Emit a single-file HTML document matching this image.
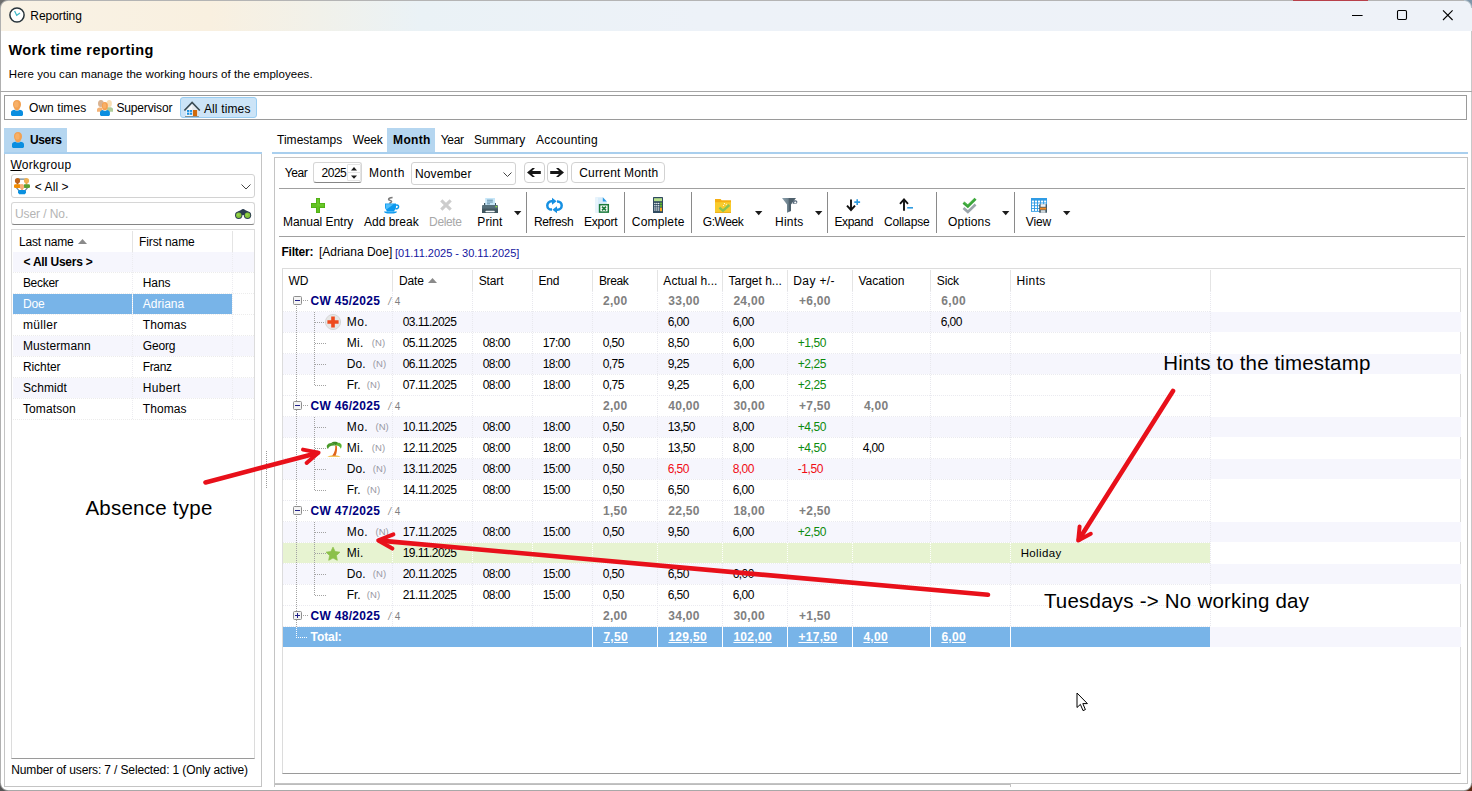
<!DOCTYPE html>
<html><head><meta charset="utf-8"><title>Reporting</title>
<style>
*{box-sizing:border-box;margin:0;padding:0}
html,body{width:1472px;height:791px;overflow:hidden;background:#fff}
body{font-family:"Liberation Sans",sans-serif;font-size:12px;color:#000;position:relative}
.a{position:absolute}
.t{position:absolute;white-space:nowrap;line-height:14px;height:14px}
.b{font-weight:bold}
.box{position:absolute;border:1px solid #a0a0a0;background:#fff}
.g{color:#808080}
.grn{color:#0c8a0c}
.red{color:#f00c14}
.navy{color:#000080}
.w{color:#fff}
svg{position:absolute;overflow:visible}
</style></head>
<body>
<div class="a" style="left:0px;top:0px;width:1472px;height:31px;background:linear-gradient(90deg,#f9f2e5 0px,#f9f0e0 210px,#f1f1ea 320px,#eaf2f6 420px,#edf2f8 700px,#eef2f8 1472px);"></div>
<div class="a" style="left:0px;top:0px;width:1472px;height:1px;background:#b4b4b4;"></div>
<div class="a" style="left:0px;top:0px;width:1px;height:791px;background:#b0b0b0;"></div>
<div class="a" style="left:0px;top:790px;width:1472px;height:1px;background:#a8a8a8;"></div>
<div class="a" style="left:1471px;top:31px;width:1px;height:760px;background:#c8c8c8;"></div>
<div class="a" style="left:0;top:0;width:8px;height:8px;background:radial-gradient(circle at 8px 8px,transparent 6.5px,#a8a8a8 7.5px,#6e6e6e 8.5px)"></div>
<div class="a" style="left:1464px;top:783px;width:8px;height:8px;background:radial-gradient(circle at 0 0,transparent 6.5px,#9a9a9a 7.5px,#5a2a14 8.5px)"></div>
<div class="a" style="left:0;top:783px;width:8px;height:8px;background:radial-gradient(circle at 8px 0,transparent 6.5px,#9a9a9a 7.5px,#555 8.5px)"></div>
<div class="a" style="left:1464px;top:0;width:8px;height:8px;background:radial-gradient(circle at 0 8px,transparent 6.5px,#b8c4cc 7.5px,#7e96aa 8.5px)"></div>
<div class="a" style="left:1293px;top:0px;width:75px;height:1px;background:#b8404a;"></div>
<div class="a" style="left:275px;top:784px;width:736px;height:1px;background:#bcbcbc;"></div>
<div class="a" style="left:274px;top:784px;width:1px;height:3px;background:#c4c4c4;"></div>
<div class="a" style="left:1010px;top:784px;width:1px;height:3px;background:#c4c4c4;"></div>
<svg style="left:9px;top:7px" width="16" height="16" viewBox="0 0 16 16"><circle cx="8" cy="8" r="7.1" fill="#fff" stroke="#27333a" stroke-width="1.5"/><path d="M5.6 3.9L7.7 8.3L11 5.9" fill="none" stroke="#3fb8c8" stroke-width="1.2"/></svg>
<div class="t " style="left:30.3px;top:9px;letter-spacing:-0.06px;">Reporting</div>
<svg style="left:1350px;top:8px" width="110" height="16" viewBox="0 0 110 16"><path d="M2 7.5h10.6" stroke="#000" stroke-width="1"/><rect x="47.5" y="2.5" width="9" height="9" rx="1.2" fill="none" stroke="#000" stroke-width="1.1"/><path d="M93 2.4l9.6 9.6M102.6 2.4l-9.6 9.6" stroke="#000" stroke-width="1.1"/></svg>
<div class="t b" style="left:8.4px;top:41px;font-size:14.5px;line-height:18px;height:18px;letter-spacing:0.41px;">Work time reporting</div>
<div class="t " style="left:8.8px;top:66.5px;font-size:11.5px;letter-spacing:0.05px;">Here you can manage the working hours of the employees.</div>
<div class="a" style="left:0px;top:91px;width:1472px;height:1px;background:#a6a6a6;"></div>
<div class="box" style="left:4px;top:95px;width:1463px;height:25px;border-color:#9a9a9a"></div>
<div class="a" style="left:180px;top:97px;width:77px;height:21px;background:#cce4f7;border:1px solid #99cdf2;border-radius:3px"></div>
<svg style="left:11px;top:100px" width="12" height="16" viewBox="0 0 12 16"><path d="M0 12.4C0 10.8 1.6 10 3.6 9.8L4.6 10.6H7.4L8.4 9.8C10.4 10 12 10.8 12 12.4V15L11 16H1L0 15Z" fill="#0a8ee0"/><path d="M6 0C8.6 0 10 1.8 10 4.2C10 6.6 8.8 8 8 9.4C7.6 10.4 4.4 10.4 4 9.4C3.2 8 2 6.6 2 4.2C2 1.8 3.4 0 6 0Z" fill="#f2a152"/><ellipse cx="5.4" cy="4.4" rx="2.2" ry="3.2" fill="#f8b670" opacity=".75"/></svg>
<svg style="left:97px;top:100px" width="16" height="16" viewBox="0 0 16 16"><ellipse cx="3.9" cy="3.5" rx="2.9" ry="3.5" fill="#d9b290"/><path d="M0 11.8V9.8C0 8.6 1 7.6 2.4 7.6H5.4V11.8Z" fill="#f4b274"/><ellipse cx="12.2" cy="3.5" rx="2.7" ry="3.5" fill="#f8deb4"/><path d="M10 7.2H13.6C15 7.2 16 8.2 16 9.4V11.8H10Z" fill="#b0cc98"/><path d="M3 12.6C3 11 4.4 10.3 6 10.1L6.8 10.8H9L9.8 10.1C11.4 10.3 12.9 11 12.9 12.6V15L11.9 16H4L3 15Z" fill="#0a8ee0"/><ellipse cx="7.9" cy="6.1" rx="3" ry="4.2" fill="#f6a150"/><ellipse cx="7.5" cy="5.8" rx="1.7" ry="2.8" fill="#fab672" opacity=".7"/></svg>
<svg style="left:184px;top:102px" width="16" height="15" viewBox="0 0 16 15"><path d="M2.2 8L8.1 2L14 8V14H2.2Z" fill="#f6f8fa"/><path d="M8.1 2L14 8V14H8.1Z" fill="#e6eaee"/><path d="M.4 8.5L8.1 .5L15.8 8.5" fill="none" stroke="#3c4c54" stroke-width="1.7"/><rect x="3" y="8" width="5.1" height="4.8" fill="#1a90e0"/><path d="M5.55 8v4.8M3 10.4h5.1" stroke="#eaf4fc" stroke-width=".7"/><rect x="9" y="8" width="4.1" height="6" fill="#d06a0a"/><rect x="1" y="14" width="13.9" height="1" fill="#8a9494"/></svg>
<div class="t " style="left:29.0px;top:101px;letter-spacing:0.06px;">Own times</div>
<div class="t " style="left:116.4px;top:101px;letter-spacing:-0.14px;">Supervisor</div>
<div class="t " style="left:203.9px;top:102px;letter-spacing:0.15px;">All times</div>
<div class="a" style="left:4px;top:128px;width:63px;height:24px;background:#b5d6f0;"></div>
<svg style="left:12px;top:132px" width="12" height="16" viewBox="0 0 12 16"><path d="M0 12.4C0 10.8 1.6 10 3.6 9.8L4.6 10.6H7.4L8.4 9.8C10.4 10 12 10.8 12 12.4V15L11 16H1L0 15Z" fill="#0a8ee0"/><path d="M6 0C8.6 0 10 1.8 10 4.2C10 6.6 8.8 8 8 9.4C7.6 10.4 4.4 10.4 4 9.4C3.2 8 2 6.6 2 4.2C2 1.8 3.4 0 6 0Z" fill="#f2a152"/><ellipse cx="5.4" cy="4.4" rx="2.2" ry="3.2" fill="#f8b670" opacity=".75"/></svg>
<div class="t b" style="left:29.9px;top:133px;letter-spacing:-0.33px;">Users</div>
<div class="a" style="left:4px;top:152px;width:258px;height:2px;background:#a9cfee;"></div>
<div class="box" style="left:4px;top:154px;width:258px;height:633px;border-color:#c4c4c4;border-top:none"></div>
<div class="t " style="left:10.4px;top:158px;letter-spacing:0.28px;"><u>W</u>orkgroup</div>
<div class="box" style="left:11px;top:174px;width:244px;height:24px;border-color:#d2d2d2;border-radius:3px"></div>
<svg style="left:14px;top:178px" width="16" height="16.4" viewBox="0 0 16 16.4"><path d="M3.4 1.1H12.6M2.4 9.6L5.6 13.4M13.6 9.6L10.4 13.4" fill="none" stroke="#708898" stroke-width="1.3"/><circle cx="3.5" cy="2.7" r="2.6" fill="#c0651a"/><rect x="2.6" y="4.6" width="1.8" height="2" fill="#b85c14"/><circle cx="12.5" cy="2.7" r="2.6" fill="#f0b252"/><rect x="11.6" y="4.6" width="1.8" height="2" fill="#eaa444"/><rect x="0" y="6.2" width="7" height="3.9" rx="1.3" fill="#f28c00"/><rect x="9.6" y="6.2" width="6.4" height="3.9" rx="1.3" fill="#5aa032"/><ellipse cx="8" cy="8.7" rx="2.1" ry="2.8" fill="#f8b078"/><rect x="7.2" y="10.6" width="1.6" height="1.8" fill="#f2a468"/><path d="M4 13.6C4 12.5 5 12.1 6 12.1H10C11 12.1 12 12.5 12 13.6V14.8L10.8 16.3H5.2L4 14.8Z" fill="#0a90e0"/></svg>
<div class="t " style="left:34.8px;top:180px;letter-spacing:0.06px;">&lt; All &gt;</div>
<svg style="left:241px;top:184px" width="10" height="6" viewBox="0 0 10 6"><path d="M.5 .5l4.5 4.5l4.5-4.5" fill="none" stroke="#444" stroke-width="1"/></svg>
<div class="box" style="left:11px;top:202px;width:244px;height:23px;border-color:#d6d6d6;border-bottom-color:#868686;border-radius:3px"></div>
<div class="t " style="left:14.9px;top:207px;color:#b4b4b4;letter-spacing:-0.07px;">User / No.</div>
<svg style="left:235px;top:208.8px" width="16.4" height="10.2" viewBox="0 0 16.4 10.2"><path d="M2.6 3C3.6 1.6 5.6 1.2 6.2 .9C6.6 .3 7.2 0 8.1 0C9 0 9.6 .3 10 .9C10.6 1.2 12.6 1.6 13.6 3L10.8 6H5.4Z" fill="#2c3e50"/><circle cx="3.7" cy="6.3" r="3.7" fill="#2c3e50"/><circle cx="12.5" cy="6.3" r="3.7" fill="#2c3e50"/><circle cx="3.7" cy="6.3" r="2.7" fill="#84c63a"/><circle cx="12.5" cy="6.3" r="2.7" fill="#84c63a"/><circle cx="3.2" cy="5.7" r="1.3" fill="#9ad652" opacity=".8"/><circle cx="12" cy="5.7" r="1.3" fill="#9ad652" opacity=".8"/></svg>
<div class="box" style="left:11px;top:229px;width:244px;height:530px;border-color:#dcdcdc;border-bottom-color:#9a9a9a"></div>
<div class="t " style="left:18.9px;top:235px;letter-spacing:-0.15px;">Last name</div>
<div class="t " style="left:139.1px;top:235px;letter-spacing:-0.12px;">First name</div>
<svg style="left:78px;top:239px" width="9" height="5" viewBox="0 0 9 5"><path d="M0 5L4.5 0L9 5Z" fill="#8a8a8a"/></svg>
<div class="a" style="left:132px;top:231px;width:1px;height:21px;background:#e4e4e4;"></div>
<div class="a" style="left:232px;top:231px;width:1px;height:21px;background:#e4e4e4;"></div>
<div class="a" style="left:13px;top:252px;width:241px;height:20px;background:#f6f6fd;"></div>
<div class="t b" style="left:23.5px;top:255px;letter-spacing:-0.26px;">&lt; All Users &gt;</div>
<div class="t " style="left:22.9px;top:276px;letter-spacing:-0.29px;">Becker</div>
<div class="t " style="left:142.8px;top:276px;letter-spacing:-0.13px;">Hans</div>
<div class="a" style="left:13px;top:294px;width:119px;height:20px;background:#78b4e8;"></div>
<div class="a" style="left:133px;top:294px;width:99px;height:20px;background:#78b4e8;"></div>
<div class="t w" style="left:22.9px;top:297px;letter-spacing:-0.14px;">Doe</div>
<div class="t w" style="left:142.8px;top:297px;">Adriana</div>
<div class="t " style="left:22.9px;top:318px;letter-spacing:0.34px;">müller</div>
<div class="t " style="left:142.8px;top:318px;letter-spacing:0.07px;">Thomas</div>
<div class="a" style="left:13px;top:336px;width:241px;height:20px;background:#f6f6fd;"></div>
<div class="t " style="left:22.9px;top:339px;letter-spacing:0.13px;">Mustermann</div>
<div class="t " style="left:142.8px;top:339px;letter-spacing:-0.19px;">Georg</div>
<div class="t " style="left:22.9px;top:360px;letter-spacing:-0.05px;">Richter</div>
<div class="t " style="left:142.8px;top:360px;letter-spacing:-0.38px;">Franz</div>
<div class="a" style="left:13px;top:378px;width:241px;height:20px;background:#f6f6fd;"></div>
<div class="t " style="left:22.9px;top:381px;letter-spacing:0.12px;">Schmidt</div>
<div class="t " style="left:142.8px;top:381px;letter-spacing:0.29px;">Hubert</div>
<div class="t " style="left:22.9px;top:402px;letter-spacing:0.12px;">Tomatson</div>
<div class="t " style="left:142.8px;top:402px;letter-spacing:0.07px;">Thomas</div>
<div class="a" style="left:132px;top:252px;width:1px;height:168px;background:repeating-linear-gradient(180deg,#ececf0 0 1px,transparent 1px 2px)"></div>
<div class="a" style="left:232px;top:252px;width:1px;height:168px;background:repeating-linear-gradient(180deg,#ececf0 0 1px,transparent 1px 2px)"></div>
<div class="a" style="left:13px;top:272px;width:241px;height:1px;background:repeating-linear-gradient(90deg,#ececec 0 1px,transparent 1px 2px)"></div>
<div class="a" style="left:13px;top:293px;width:241px;height:1px;background:repeating-linear-gradient(90deg,#ececec 0 1px,transparent 1px 2px)"></div>
<div class="a" style="left:13px;top:314px;width:241px;height:1px;background:repeating-linear-gradient(90deg,#ececec 0 1px,transparent 1px 2px)"></div>
<div class="a" style="left:13px;top:335px;width:241px;height:1px;background:repeating-linear-gradient(90deg,#ececec 0 1px,transparent 1px 2px)"></div>
<div class="a" style="left:13px;top:356px;width:241px;height:1px;background:repeating-linear-gradient(90deg,#ececec 0 1px,transparent 1px 2px)"></div>
<div class="a" style="left:13px;top:377px;width:241px;height:1px;background:repeating-linear-gradient(90deg,#ececec 0 1px,transparent 1px 2px)"></div>
<div class="a" style="left:13px;top:398px;width:241px;height:1px;background:repeating-linear-gradient(90deg,#ececec 0 1px,transparent 1px 2px)"></div>
<div class="a" style="left:13px;top:419px;width:241px;height:1px;background:repeating-linear-gradient(90deg,#ececec 0 1px,transparent 1px 2px)"></div>
<div class="t " style="left:11.2px;top:763px;letter-spacing:-0.13px;">Number of users: 7 / Selected: 1 (Only active)</div>
<div class="a" style="left:266px;top:451px;width:1px;height:37px;background:repeating-linear-gradient(180deg,#9a9a9a 0 1px,transparent 1px 2px)"></div>
<div class="a" style="left:387px;top:128px;width:48px;height:24px;background:#b5d6f0;"></div>
<div class="t " style="left:277.0px;top:133px;letter-spacing:0.03px;">Timestamps</div>
<div class="t " style="left:352.7px;top:133px;letter-spacing:-0.14px;">Week</div>
<div class="t b" style="left:393.1px;top:133px;letter-spacing:0.3px;">Month</div>
<div class="t " style="left:440.8px;top:133px;letter-spacing:-0.36px;">Year</div>
<div class="t " style="left:473.9px;top:133px;">Summary</div>
<div class="t " style="left:536.0px;top:133px;letter-spacing:0.26px;">Accounting</div>
<div class="a" style="left:272px;top:152px;width:1196px;height:2px;background:#a9cfee;"></div>
<div class="box" style="left:274px;top:157px;width:1194px;height:627px;border-color:#c4c4c4"></div>
<div class="t " style="left:284.8px;top:166px;letter-spacing:-0.41px;">Year</div>
<div class="box" style="left:313px;top:162px;width:49px;height:21px;border-color:#d6d6d6;border-bottom-color:#868686;border-radius:3px"></div>
<div class="t " style="left:321.4px;top:166px;letter-spacing:-0.43px;">2025</div>
<div class="a" style="left:347px;top:164px;width:14px;height:9px;border:1px solid #e4e4e4;border-radius:1px"></div>
<div class="a" style="left:347px;top:172px;width:14px;height:9px;border:1px solid #e4e4e4;border-radius:1px"></div>
<svg style="left:350.8px;top:166.5px" width="6" height="12" viewBox="0 0 6 12"><path d="M0 3.4L3 0L6 3.4Z" fill="#1a1a1a"/><path d="M0 8.4L3 11.8L6 8.4Z" fill="#1a1a1a"/></svg>
<div class="t " style="left:368.9px;top:166px;letter-spacing:0.53px;">Month</div>
<div class="box" style="left:411px;top:162px;width:105px;height:23px;border-color:#d2d2d2;border-radius:3px"></div>
<div class="t " style="left:414.9px;top:167px;letter-spacing:0.17px;">November</div>
<svg style="left:503px;top:172px" width="9" height="5" viewBox="0 0 9 5"><path d="M.5 .5l4 4l4-4" fill="none" stroke="#444" stroke-width="1"/></svg>
<div class="box" style="left:524px;top:162px;width:21px;height:21px;border-color:#d0d0d0;border-radius:4px"></div>
<div class="box" style="left:547px;top:162px;width:21px;height:21px;border-color:#d0d0d0;border-radius:4px"></div>
<svg style="left:527px;top:168px" width="14" height="9" viewBox="0 0 14 9"><path d="M0 4.5L5.5 0H8L5 3H13.8V6H5L8 9H5.5Z" fill="#161616"/></svg>
<svg style="left:550px;top:168px" width="14" height="9" viewBox="0 0 14 9"><path d="M14 4.5L8.5 0H6L9 3H.2V6H9L6 9H8.5Z" fill="#161616"/></svg>
<div class="box" style="left:571px;top:162px;width:94px;height:21px;border-color:#d2d2d2;border-radius:4px"></div>
<div class="t " style="left:579.2px;top:166px;letter-spacing:0.19px;">Current Month</div>
<div class="a" style="left:279px;top:188px;width:1186px;height:1px;background:#a0a0a0;"></div>
<div class="a" style="left:279px;top:236px;width:1186px;height:1px;background:#a0a0a0;"></div>
<div class="t " style="left:283.0px;top:215px;letter-spacing:-0.03px;">Manual Entry</div>
<div class="t " style="left:364.0px;top:215px;">Add break</div>
<div class="t " style="left:429.1px;top:215px;color:#a8a8a8;letter-spacing:-0.36px;">Delete</div>
<div class="t " style="left:477.3px;top:215px;letter-spacing:0.12px;">Print</div>
<div class="t " style="left:533.9px;top:215px;letter-spacing:-0.39px;">Refresh</div>
<div class="t " style="left:584.0px;top:215px;letter-spacing:-0.23px;">Export</div>
<div class="t " style="left:631.8px;top:215px;letter-spacing:0.18px;">Complete</div>
<div class="t " style="left:702.8px;top:215px;letter-spacing:-0.45px;">G:Week</div>
<div class="t " style="left:775.0px;top:215px;letter-spacing:0.21px;">Hints</div>
<div class="t " style="left:834.4px;top:215px;letter-spacing:-0.32px;">Expand</div>
<div class="t " style="left:884.0px;top:215px;letter-spacing:-0.14px;">Collapse</div>
<div class="t " style="left:948.1px;top:215px;letter-spacing:0.16px;">Options</div>
<div class="t " style="left:1025.7px;top:215px;letter-spacing:-0.07px;">View</div>
<div class="a" style="left:526px;top:192px;width:1px;height:41px;background:#8a8a8a;"></div>
<div class="a" style="left:624px;top:192px;width:1px;height:41px;background:#8a8a8a;"></div>
<div class="a" style="left:691px;top:192px;width:1px;height:41px;background:#8a8a8a;"></div>
<div class="a" style="left:827px;top:192px;width:1px;height:41px;background:#8a8a8a;"></div>
<div class="a" style="left:936px;top:192px;width:1px;height:41px;background:#8a8a8a;"></div>
<div class="a" style="left:1014px;top:192px;width:1px;height:41px;background:#8a8a8a;"></div>
<svg style="left:514px;top:211px" width="8" height="5" viewBox="0 0 8 5"><path d="M0 0h7.4L3.7 4.2Z" fill="#1c1c1c"/></svg>
<svg style="left:754.5px;top:211px" width="8" height="5" viewBox="0 0 8 5"><path d="M0 0h7.4L3.7 4.2Z" fill="#1c1c1c"/></svg>
<svg style="left:815px;top:211px" width="8" height="5" viewBox="0 0 8 5"><path d="M0 0h7.4L3.7 4.2Z" fill="#1c1c1c"/></svg>
<svg style="left:1002px;top:211px" width="8" height="5" viewBox="0 0 8 5"><path d="M0 0h7.4L3.7 4.2Z" fill="#1c1c1c"/></svg>
<svg style="left:1063px;top:211px" width="8" height="5" viewBox="0 0 8 5"><path d="M0 0h7.4L3.7 4.2Z" fill="#1c1c1c"/></svg>
<svg style="left:311px;top:198px" width="14" height="15" viewBox="0 0 14 15"><path d="M5 0H9V5H14V10H9V15H5V10H0V5H5Z" fill="#4fae14"/><path d="M5.8 .8H8.2V5.8H13.2V9.2H8.2V14.2H5.8V9.2H.8V5.8H5.8Z" fill="#62c222"/><path d="M6.4 1.4H7.6V6.4H12.6V7.4H6.4Z" fill="#7ad238" opacity=".7"/></svg>
<svg style="left:384px;top:196.6px" width="16" height="17" viewBox="0 0 16 17"><path d="M8.6 .6C6.4 .8 4.6 1.6 4.6 2.4C4.6 3.4 7.6 3.4 7.6 4.6C7.6 5.6 5.6 5.8 5.4 6.6" fill="none" stroke="#7c7c7c" stroke-width="1.5"/><path d="M1 6.4H12V10C12 11.6 10.8 13.2 9.8 14.4H3.2C2.2 13.2 1 11.6 1 10Z" fill="#0c98ee"/><path d="M1.8 7.2H9.6L2.4 12.6C2 11.8 1.8 11 1.8 10Z" fill="#52c0fc"/><path d="M11.6 8.2C13.4 7.6 14.6 8.4 14.6 9.8C14.6 11.2 13.2 12 11.4 11.8" fill="none" stroke="#0c98ee" stroke-width="1.5"/><path d="M0 14.6H13C12.6 16.2 11.4 16.6 6.5 16.6C1.6 16.6 .4 16.2 0 14.6Z" fill="#0c98ee"/><path d="M3.6 14.8H9.4" stroke="#52c0fc" stroke-width=".8"/></svg>
<svg style="left:440px;top:199px" width="12" height="12" viewBox="0 0 12 12"><path d="M1.3 1.3L10.7 10.7M10.7 1.3L1.3 10.7" stroke="#cdcdcd" stroke-width="3.1" stroke-linecap="butt"/></svg>
<svg style="left:482px;top:198px" width="16" height="15" viewBox="0 0 16 15"><path d="M2 5H14V8H2Z" fill="#3f5560"/><path d="M3.2 0H13V8H3.2Z" fill="#c6e6f8"/><path d="M5 2.2h5.8M5 4h5.8M5 5.8h3" stroke="#5a86a0" stroke-width=".9"/><path d="M1.2 7H14.8C15.5 7 16 7.5 16 8.2V15H0V8.2C0 7.5 .5 7 1.2 7Z" fill="#546e7a"/><rect x="0" y="10.6" width="16" height="4.4" fill="#41565f"/><rect x="3.4" y="12.8" width="9.4" height="1.5" rx=".7" fill="#f4f8fa"/><rect x="13.4" y="8" width="1.8" height="1.3" fill="#8edc3c"/></svg>
<svg style="left:545.5px;top:197.8px" width="17" height="15" viewBox="0 0 17 15"><g fill="none" stroke="#1690e2" stroke-width="2.5"><path d="M6.6 3.3H5.4C3 3.3 1.3 5.2 1.3 7.4C1.3 9.6 3 11.6 5.4 11.6H6"/><path d="M10.4 11.7H11.6C14 11.7 15.7 9.8 15.7 7.6C15.7 5.4 14 3.4 11.6 3.4H11"/></g><path d="M6 -.2L10.6 3.3L6 6.8Z" fill="#1690e2"/><path d="M11 8.2L6.4 11.7L11 15.2Z" fill="#1690e2"/></svg>
<svg style="left:595px;top:197px" width="15" height="16" viewBox="0 0 15 16"><path d="M.4 .2H7.8L11.8 4.4V15.8H.4Z" fill="#d8ecfa"/><path d="M.4 .2H3V15.8H.4Z" fill="#e8f4fc"/><path d="M7.8 .2V4.4H11.8Z" fill="#2b9be4"/><rect x="4.6" y="7.7" width="8.7" height="7.4" fill="#fff" stroke="#1b7a3a" stroke-width="1.5"/><path d="M7 9.6L11 13.3M11 9.6L7 13.3" stroke="#1b7a3a" stroke-width="1.7"/></svg>
<svg style="left:653px;top:197px" width="10" height="16" viewBox="0 0 10 16"><rect x="0" y="0" width="10" height="16" rx=".6" fill="#2f4a60"/><rect x="1" y="1.2" width="8" height="3" fill="#b6e08c"/><circle cx="1.9" cy="6.5" r=".75" fill="#f2f6f8"/><circle cx="3.8" cy="6.5" r=".75" fill="#f2f6f8"/><circle cx="5.699999999999999" cy="6.5" r=".75" fill="#f2f6f8"/><circle cx="1.9" cy="8.7" r=".75" fill="#f2f6f8"/><circle cx="3.8" cy="8.7" r=".75" fill="#f2f6f8"/><circle cx="5.699999999999999" cy="8.7" r=".75" fill="#f2f6f8"/><circle cx="1.9" cy="10.9" r=".75" fill="#f2f6f8"/><circle cx="3.8" cy="10.9" r=".75" fill="#f2f6f8"/><circle cx="5.699999999999999" cy="10.9" r=".75" fill="#f2f6f8"/><circle cx="1.9" cy="13.100000000000001" r=".75" fill="#f2f6f8"/><circle cx="3.8" cy="13.100000000000001" r=".75" fill="#f2f6f8"/><circle cx="5.699999999999999" cy="13.100000000000001" r=".75" fill="#f2f6f8"/><rect x="7" y="5.6" width="2" height="1.8" fill="#5fb62a"/><rect x="7" y="8" width="2" height="1.8" fill="#5fb62a"/><rect x="7" y="10.6" width="2" height="3.6" fill="#f8a81c"/></svg>
<svg style="left:715px;top:199px" width="16" height="14" viewBox="0 0 16 14"><path d="M0 0H5.6L6.6 1.2H16V14H0Z" fill="#f6ae12"/><path d="M0 3.2H16V14H0Z" fill="#f9cb2c"/><path d="M0 13H16V14H0Z" fill="#efb21c"/><path d="M4.4 8.6L8 11.6L14.4 6" fill="none" stroke="#8cc252" stroke-width="2.4"/><circle cx="9.4" cy="4.6" r=".6" fill="#fff"/><circle cx="11.3" cy="5.3" r=".55" fill="#fff"/><circle cx="8.4" cy="6.5" r=".55" fill="#fff"/></svg>
<svg style="left:782px;top:198px" width="16" height="15" viewBox="0 0 16 15"><defs><linearGradient id="gf" x1="0" y1="0" x2="1" y2="0"><stop offset="0" stop-color="#8ea2ae"/><stop offset=".45" stop-color="#6c808c"/><stop offset=".5" stop-color="#4e606c"/><stop offset="1" stop-color="#4e606c"/></linearGradient></defs><path d="M0 0H14L9 6.4V13L5 14.8V6.4Z" fill="url(#gf)"/><path d="M11.4 2.2H13.6C14.6 2.2 15.3 3 15.3 4C15.3 5 14.6 5.8 13.6 5.8H10.6Z" fill="#55687a"/><ellipse cx="13.3" cy="4.4" rx="1.1" ry=".9" fill="#fff"/></svg>
<svg style="left:846px;top:199px" width="15" height="13" viewBox="0 0 15 13"><path d="M5 .4V11" stroke="#111" stroke-width="1.9"/><path d="M1 6.6L5 11L9 6.6" fill="none" stroke="#111" stroke-width="1.9"/><path d="M11.2 .2V6M8.3 3.1H14.1" stroke="#2f9be0" stroke-width="1.6"/></svg>
<svg style="left:899px;top:198px" width="15" height="14" viewBox="0 0 15 14"><path d="M5 12.8V1.6" stroke="#111" stroke-width="1.9"/><path d="M1 5.8L5 1.4L9 5.8" fill="none" stroke="#111" stroke-width="1.9"/><path d="M8.2 9.8H14" stroke="#2f9be0" stroke-width="1.6"/></svg>
<svg style="left:961.5px;top:196.8px" width="15" height="16.5" viewBox="0 0 16 18"><path d="M1.4 12L6.2 16.2L14.6 8.2" fill="none" stroke="#9ca6ac" stroke-width="2.9"/><path d="M1.4 6.2L6.2 10.2L14.6 2" fill="none" stroke="#3aa43a" stroke-width="3.1"/><path d="M1.8 5.4L6.2 9L14 1.4" fill="none" stroke="#58c050" stroke-width="1" opacity=".7"/></svg>
<svg style="left:1031px;top:198px" width="16" height="15" viewBox="0 0 16 15"><rect x="0" y="0" width="16" height="13.8" fill="#2f9be4"/><rect x="0.9" y="2.6" width="2.1" height="1.9" fill="#fff"/><rect x="3.9499999999999997" y="2.6" width="2.1" height="1.9" fill="#fff"/><rect x="7.0" y="2.6" width="2.1" height="1.9" fill="#fff"/><rect x="10.049999999999999" y="2.6" width="2.1" height="1.9" fill="#fff"/><rect x="13.1" y="2.6" width="2.1" height="1.9" fill="#fff"/><rect x="0.9" y="5.4" width="2.1" height="1.9" fill="#fff"/><rect x="3.9499999999999997" y="5.4" width="2.1" height="1.9" fill="#fff"/><rect x="7.0" y="5.4" width="2.1" height="1.9" fill="#fff"/><rect x="10.049999999999999" y="5.4" width="2.1" height="1.9" fill="#fff"/><rect x="13.1" y="5.4" width="2.1" height="1.9" fill="#fff"/><rect x="0.9" y="8.2" width="2.1" height="1.9" fill="#fff"/><rect x="3.9499999999999997" y="8.2" width="2.1" height="1.9" fill="#fff"/><rect x="7.0" y="8.2" width="2.1" height="1.9" fill="#fff"/><rect x="10.049999999999999" y="8.2" width="2.1" height="1.9" fill="#fff"/><rect x="13.1" y="8.2" width="2.1" height="1.9" fill="#fff"/><rect x="0.9" y="10.999999999999998" width="2.1" height="1.9" fill="#fff"/><rect x="3.9499999999999997" y="10.999999999999998" width="2.1" height="1.9" fill="#fff"/><rect x="7.0" y="10.999999999999998" width="2.1" height="1.9" fill="#fff"/><rect x="10.049999999999999" y="10.999999999999998" width="2.1" height="1.9" fill="#fff"/><rect x="13.1" y="10.999999999999998" width="2.1" height="1.9" fill="#fff"/><rect x="8.2" y="6.2" width="7.8" height="8.6" rx=".4" fill="#455a66"/><rect x="9.6" y="6.2" width="5" height="2.6" fill="#eef3f6"/><rect x="9" y="9.6" width="6.2" height="2" fill="#f58a1e"/><rect x="9.8" y="12.2" width="4.6" height="2.6" fill="#cfd8dc"/></svg>
<div class="t b" style="left:281.4px;top:245px;letter-spacing:-0.21px;">Filter:</div>
<div class="t " style="left:318.9px;top:245px;">[Adriana Doe]</div>
<div class="t " style="left:395.0px;top:246px;font-size:11px;color:#1414a0;">[01.11.2025 - 30.11.2025]</div>
<div class="box" style="left:282px;top:268px;width:1179px;height:506px;border-color:#dcdcdc;border-bottom-color:#9a9a9a"></div>
<div class="t " style="left:288.4px;top:274px;letter-spacing:0.1px;">WD</div>
<div class="t " style="left:399.0px;top:274px;letter-spacing:-0.11px;">Date</div>
<div class="t " style="left:478.7px;top:274px;letter-spacing:-0.11px;">Start</div>
<div class="t " style="left:538.4px;top:274px;letter-spacing:-0.19px;">End</div>
<div class="t " style="left:599.0px;top:274px;letter-spacing:-0.39px;">Break</div>
<div class="t " style="left:663.3px;top:274px;letter-spacing:0.08px;">Actual h...</div>
<div class="t " style="left:728.5px;top:274px;">Target h...</div>
<div class="t " style="left:793.3px;top:274px;letter-spacing:0.37px;">Day +/-</div>
<div class="t " style="left:858.5px;top:274px;">Vacation</div>
<div class="t " style="left:936.8px;top:274px;letter-spacing:-0.14px;">Sick</div>
<div class="t " style="left:1016.4px;top:274px;letter-spacing:0.41px;">Hints</div>
<svg style="left:428px;top:278px" width="9" height="5" viewBox="0 0 9 5"><path d="M0 5L4.5 0L9 5Z" fill="#8a8a8a"/></svg>
<div class="a" style="left:392px;top:270px;width:1px;height:21px;background:#e4e4e4;"></div>
<div class="a" style="left:472px;top:270px;width:1px;height:21px;background:#e4e4e4;"></div>
<div class="a" style="left:532px;top:270px;width:1px;height:21px;background:#e4e4e4;"></div>
<div class="a" style="left:592px;top:270px;width:1px;height:21px;background:#e4e4e4;"></div>
<div class="a" style="left:657px;top:270px;width:1px;height:21px;background:#e4e4e4;"></div>
<div class="a" style="left:722px;top:270px;width:1px;height:21px;background:#e4e4e4;"></div>
<div class="a" style="left:787px;top:270px;width:1px;height:21px;background:#e4e4e4;"></div>
<div class="a" style="left:852px;top:270px;width:1px;height:21px;background:#e4e4e4;"></div>
<div class="a" style="left:930px;top:270px;width:1px;height:21px;background:#e4e4e4;"></div>
<div class="a" style="left:1010px;top:270px;width:1px;height:21px;background:#e4e4e4;"></div>
<div class="a" style="left:1210px;top:270px;width:1px;height:21px;background:#e4e4e4;"></div>
<div class="a" style="left:283px;top:312px;width:1178px;height:20px;background:#f6f6fd;"></div>
<div class="a" style="left:283px;top:354px;width:1178px;height:20px;background:#f6f6fd;"></div>
<div class="a" style="left:283px;top:417px;width:1178px;height:20px;background:#f6f6fd;"></div>
<div class="a" style="left:283px;top:459px;width:1178px;height:20px;background:#f6f6fd;"></div>
<div class="a" style="left:283px;top:522px;width:1178px;height:20px;background:#f6f6fd;"></div>
<div class="a" style="left:283px;top:543px;width:927px;height:20px;background:#e7f3d1;"></div>
<div class="a" style="left:283px;top:564px;width:1178px;height:20px;background:#f6f6fd;"></div>
<div class="a" style="left:283px;top:627px;width:1178px;height:20px;background:#f6f6fd;"></div>
<div class="a" style="left:283px;top:627px;width:927px;height:20px;background:#78b4e8;"></div>
<div class="a" style="left:392px;top:291px;width:1px;height:336px;background:repeating-linear-gradient(180deg,#e8e8ee 0 1px,transparent 1px 2px)"></div>
<div class="a" style="left:472px;top:291px;width:1px;height:336px;background:repeating-linear-gradient(180deg,#e8e8ee 0 1px,transparent 1px 2px)"></div>
<div class="a" style="left:532px;top:291px;width:1px;height:336px;background:repeating-linear-gradient(180deg,#e8e8ee 0 1px,transparent 1px 2px)"></div>
<div class="a" style="left:592px;top:291px;width:1px;height:336px;background:repeating-linear-gradient(180deg,#e8e8ee 0 1px,transparent 1px 2px)"></div>
<div class="a" style="left:657px;top:291px;width:1px;height:336px;background:repeating-linear-gradient(180deg,#e8e8ee 0 1px,transparent 1px 2px)"></div>
<div class="a" style="left:722px;top:291px;width:1px;height:336px;background:repeating-linear-gradient(180deg,#e8e8ee 0 1px,transparent 1px 2px)"></div>
<div class="a" style="left:787px;top:291px;width:1px;height:336px;background:repeating-linear-gradient(180deg,#e8e8ee 0 1px,transparent 1px 2px)"></div>
<div class="a" style="left:852px;top:291px;width:1px;height:336px;background:repeating-linear-gradient(180deg,#e8e8ee 0 1px,transparent 1px 2px)"></div>
<div class="a" style="left:930px;top:291px;width:1px;height:336px;background:repeating-linear-gradient(180deg,#e8e8ee 0 1px,transparent 1px 2px)"></div>
<div class="a" style="left:1010px;top:291px;width:1px;height:336px;background:repeating-linear-gradient(180deg,#e8e8ee 0 1px,transparent 1px 2px)"></div>
<div class="a" style="left:1210px;top:291px;width:1px;height:336px;background:repeating-linear-gradient(180deg,#e8e8ee 0 1px,transparent 1px 2px)"></div>
<div class="a" style="left:283px;top:311px;width:927px;height:1px;background:repeating-linear-gradient(90deg,#eaeaf0 0 1px,transparent 1px 2px)"></div>
<div class="a" style="left:283px;top:332px;width:927px;height:1px;background:repeating-linear-gradient(90deg,#eaeaf0 0 1px,transparent 1px 2px)"></div>
<div class="a" style="left:283px;top:353px;width:927px;height:1px;background:repeating-linear-gradient(90deg,#eaeaf0 0 1px,transparent 1px 2px)"></div>
<div class="a" style="left:283px;top:374px;width:927px;height:1px;background:repeating-linear-gradient(90deg,#eaeaf0 0 1px,transparent 1px 2px)"></div>
<div class="a" style="left:283px;top:395px;width:927px;height:1px;background:repeating-linear-gradient(90deg,#eaeaf0 0 1px,transparent 1px 2px)"></div>
<div class="a" style="left:283px;top:416px;width:927px;height:1px;background:repeating-linear-gradient(90deg,#eaeaf0 0 1px,transparent 1px 2px)"></div>
<div class="a" style="left:283px;top:437px;width:927px;height:1px;background:repeating-linear-gradient(90deg,#eaeaf0 0 1px,transparent 1px 2px)"></div>
<div class="a" style="left:283px;top:458px;width:927px;height:1px;background:repeating-linear-gradient(90deg,#eaeaf0 0 1px,transparent 1px 2px)"></div>
<div class="a" style="left:283px;top:479px;width:927px;height:1px;background:repeating-linear-gradient(90deg,#eaeaf0 0 1px,transparent 1px 2px)"></div>
<div class="a" style="left:283px;top:500px;width:927px;height:1px;background:repeating-linear-gradient(90deg,#eaeaf0 0 1px,transparent 1px 2px)"></div>
<div class="a" style="left:283px;top:521px;width:927px;height:1px;background:repeating-linear-gradient(90deg,#eaeaf0 0 1px,transparent 1px 2px)"></div>
<div class="a" style="left:283px;top:542px;width:927px;height:1px;background:repeating-linear-gradient(90deg,#eaeaf0 0 1px,transparent 1px 2px)"></div>
<div class="a" style="left:283px;top:563px;width:927px;height:1px;background:repeating-linear-gradient(90deg,#eaeaf0 0 1px,transparent 1px 2px)"></div>
<div class="a" style="left:283px;top:584px;width:927px;height:1px;background:repeating-linear-gradient(90deg,#eaeaf0 0 1px,transparent 1px 2px)"></div>
<div class="a" style="left:283px;top:605px;width:927px;height:1px;background:repeating-linear-gradient(90deg,#eaeaf0 0 1px,transparent 1px 2px)"></div>
<div class="a" style="left:283px;top:626px;width:927px;height:1px;background:repeating-linear-gradient(90deg,#eaeaf0 0 1px,transparent 1px 2px)"></div>
<div class="a" style="left:392px;top:543px;width:1px;height:20px;background:repeating-linear-gradient(180deg,#ffffff 0 1px,transparent 1px 2px)"></div>
<div class="a" style="left:472px;top:543px;width:1px;height:20px;background:repeating-linear-gradient(180deg,#ffffff 0 1px,transparent 1px 2px)"></div>
<div class="a" style="left:532px;top:543px;width:1px;height:20px;background:repeating-linear-gradient(180deg,#ffffff 0 1px,transparent 1px 2px)"></div>
<div class="a" style="left:592px;top:543px;width:1px;height:20px;background:repeating-linear-gradient(180deg,#ffffff 0 1px,transparent 1px 2px)"></div>
<div class="a" style="left:657px;top:543px;width:1px;height:20px;background:repeating-linear-gradient(180deg,#ffffff 0 1px,transparent 1px 2px)"></div>
<div class="a" style="left:722px;top:543px;width:1px;height:20px;background:repeating-linear-gradient(180deg,#ffffff 0 1px,transparent 1px 2px)"></div>
<div class="a" style="left:787px;top:543px;width:1px;height:20px;background:repeating-linear-gradient(180deg,#ffffff 0 1px,transparent 1px 2px)"></div>
<div class="a" style="left:852px;top:543px;width:1px;height:20px;background:repeating-linear-gradient(180deg,#ffffff 0 1px,transparent 1px 2px)"></div>
<div class="a" style="left:930px;top:543px;width:1px;height:20px;background:repeating-linear-gradient(180deg,#ffffff 0 1px,transparent 1px 2px)"></div>
<div class="a" style="left:1010px;top:543px;width:1px;height:20px;background:repeating-linear-gradient(180deg,#ffffff 0 1px,transparent 1px 2px)"></div>
<div class="a" style="left:592px;top:627px;width:1px;height:20px;background:#fff;"></div>
<div class="a" style="left:657px;top:627px;width:1px;height:20px;background:#fff;"></div>
<div class="a" style="left:722px;top:627px;width:1px;height:20px;background:#fff;"></div>
<div class="a" style="left:787px;top:627px;width:1px;height:20px;background:#fff;"></div>
<div class="a" style="left:852px;top:627px;width:1px;height:20px;background:#fff;"></div>
<div class="a" style="left:930px;top:627px;width:1px;height:20px;background:#fff;"></div>
<div class="a" style="left:1010px;top:627px;width:1px;height:20px;background:#fff;"></div>
<div class="a" style="left:296px;top:306px;width:1px;height:321px;background:repeating-linear-gradient(180deg,#a2a2a2 0 1px,transparent 1px 2px)"></div>
<div class="a" style="left:296px;top:627px;width:1px;height:10px;background:repeating-linear-gradient(180deg,#ffffff 0 1px,transparent 1px 2px)"></div>
<div class="a" style="left:296px;top:637px;width:12px;height:1px;background:repeating-linear-gradient(90deg,#ffffff 0 1px,transparent 1px 2px)"></div>
<svg style="left:293px;top:296px" width="9" height="9" viewBox="0 0 9 9"><rect x=".5" y=".5" width="8" height="8" rx="1" fill="#f4f4f4" stroke="#8e8e8e" stroke-width="1"/><path d="M2 4.5H7" stroke="#20208a" stroke-width="1"/></svg>
<div class="a" style="left:303px;top:300px;width:5px;height:1px;background:repeating-linear-gradient(90deg,#a2a2a2 0 1px,transparent 1px 2px)"></div>
<div class="a" style="left:314px;top:312px;width:1px;height:74px;background:repeating-linear-gradient(180deg,#a2a2a2 0 1px,transparent 1px 2px)"></div>
<div class="a" style="left:315px;top:322px;width:11px;height:1px;background:repeating-linear-gradient(90deg,#a2a2a2 0 1px,transparent 1px 2px)"></div>
<div class="a" style="left:315px;top:343px;width:11px;height:1px;background:repeating-linear-gradient(90deg,#a2a2a2 0 1px,transparent 1px 2px)"></div>
<div class="a" style="left:315px;top:364px;width:11px;height:1px;background:repeating-linear-gradient(90deg,#a2a2a2 0 1px,transparent 1px 2px)"></div>
<div class="a" style="left:315px;top:385px;width:11px;height:1px;background:repeating-linear-gradient(90deg,#a2a2a2 0 1px,transparent 1px 2px)"></div>
<svg style="left:293px;top:401px" width="9" height="9" viewBox="0 0 9 9"><rect x=".5" y=".5" width="8" height="8" rx="1" fill="#f4f4f4" stroke="#8e8e8e" stroke-width="1"/><path d="M2 4.5H7" stroke="#20208a" stroke-width="1"/></svg>
<div class="a" style="left:303px;top:405px;width:5px;height:1px;background:repeating-linear-gradient(90deg,#a2a2a2 0 1px,transparent 1px 2px)"></div>
<div class="a" style="left:314px;top:417px;width:1px;height:74px;background:repeating-linear-gradient(180deg,#a2a2a2 0 1px,transparent 1px 2px)"></div>
<div class="a" style="left:315px;top:427px;width:11px;height:1px;background:repeating-linear-gradient(90deg,#a2a2a2 0 1px,transparent 1px 2px)"></div>
<div class="a" style="left:315px;top:448px;width:11px;height:1px;background:repeating-linear-gradient(90deg,#a2a2a2 0 1px,transparent 1px 2px)"></div>
<div class="a" style="left:315px;top:469px;width:11px;height:1px;background:repeating-linear-gradient(90deg,#a2a2a2 0 1px,transparent 1px 2px)"></div>
<div class="a" style="left:315px;top:490px;width:11px;height:1px;background:repeating-linear-gradient(90deg,#a2a2a2 0 1px,transparent 1px 2px)"></div>
<svg style="left:293px;top:506px" width="9" height="9" viewBox="0 0 9 9"><rect x=".5" y=".5" width="8" height="8" rx="1" fill="#f4f4f4" stroke="#8e8e8e" stroke-width="1"/><path d="M2 4.5H7" stroke="#20208a" stroke-width="1"/></svg>
<div class="a" style="left:303px;top:510px;width:5px;height:1px;background:repeating-linear-gradient(90deg,#a2a2a2 0 1px,transparent 1px 2px)"></div>
<div class="a" style="left:314px;top:522px;width:1px;height:74px;background:repeating-linear-gradient(180deg,#a2a2a2 0 1px,transparent 1px 2px)"></div>
<div class="a" style="left:315px;top:532px;width:11px;height:1px;background:repeating-linear-gradient(90deg,#a2a2a2 0 1px,transparent 1px 2px)"></div>
<div class="a" style="left:315px;top:553px;width:11px;height:1px;background:repeating-linear-gradient(90deg,#a2a2a2 0 1px,transparent 1px 2px)"></div>
<div class="a" style="left:315px;top:574px;width:11px;height:1px;background:repeating-linear-gradient(90deg,#a2a2a2 0 1px,transparent 1px 2px)"></div>
<div class="a" style="left:315px;top:595px;width:11px;height:1px;background:repeating-linear-gradient(90deg,#a2a2a2 0 1px,transparent 1px 2px)"></div>
<svg style="left:293px;top:611px" width="9" height="9" viewBox="0 0 9 9"><rect x=".5" y=".5" width="8" height="8" rx="1" fill="#f4f4f4" stroke="#8e8e8e" stroke-width="1"/><path d="M2 4.5H7" stroke="#20208a" stroke-width="1"/><path d="M4.5 2V7" stroke="#20208a" stroke-width="1"/></svg>
<div class="a" style="left:303px;top:615px;width:5px;height:1px;background:repeating-linear-gradient(90deg,#a2a2a2 0 1px,transparent 1px 2px)"></div>
<div class="t b navy" style="left:310.6px;top:294px;letter-spacing:0.28px;">CW 45/2025</div>
<div class="t " style="left:388.2px;top:295.5px;font-size:10px;line-height:11px;height:11px;font-style:italic;color:#8a8a8a;letter-spacing:0px;">/</div>
<div class="t " style="left:394.7px;top:295.5px;font-size:10px;line-height:11px;height:11px;color:#808080;letter-spacing:0px;">4</div>
<div class="t b g" style="left:603.0px;top:294px;letter-spacing:0.3px;">2,00</div>
<div class="t b g" style="left:668.2px;top:294px;letter-spacing:0.3px;">33,00</div>
<div class="t b g" style="left:733.4px;top:294px;letter-spacing:0.3px;">24,00</div>
<div class="t b g" style="left:798.9px;top:294px;letter-spacing:0.3px;">+6,00</div>
<div class="t b g" style="left:941.3px;top:294px;letter-spacing:0.3px;">6,00</div>
<div class="t " style="left:346.8px;top:315px;letter-spacing:0.39px;">Mo.</div>
<svg style="left:325px;top:314px" width="16" height="16" viewBox="0 0 16 16"><circle cx="8" cy="8" r="7.6" fill="#e6e6e6"/><circle cx="8" cy="8" r="7.6" fill="none" stroke="#cfcfcf" stroke-width=".8"/><path d="M6.2 2.4H9.8V6.2H13.6V9.8H9.8V13.6H6.2V9.8H2.4V6.2H6.2Z" fill="#ee4a1e"/></svg>
<div class="t " style="left:402.7px;top:315px;letter-spacing:-0.56px;">03.11.2025</div>
<div class="t " style="left:667.7px;top:315px;letter-spacing:-0.56px;">6,00</div>
<div class="t " style="left:732.7px;top:315px;letter-spacing:-0.56px;">6,00</div>
<div class="t " style="left:940.7px;top:315px;letter-spacing:-0.56px;">6,00</div>
<div class="t " style="left:346.8px;top:336px;letter-spacing:0.33px;">Mi.</div>
<div class="t " style="left:371.8px;top:337px;font-size:9.5px;line-height:12px;height:12px;color:#9898a4;letter-spacing:0.1px;">(N)</div>
<div class="t " style="left:402.7px;top:336px;letter-spacing:-0.56px;">05.11.2025</div>
<div class="t " style="left:482.7px;top:336px;letter-spacing:-0.56px;">08:00</div>
<div class="t " style="left:542.7px;top:336px;letter-spacing:-0.56px;">17:00</div>
<div class="t " style="left:602.7px;top:336px;letter-spacing:-0.56px;">0,50</div>
<div class="t " style="left:667.7px;top:336px;letter-spacing:-0.56px;">8,50</div>
<div class="t " style="left:732.7px;top:336px;letter-spacing:-0.56px;">6,00</div>
<div class="t grn" style="left:797.7px;top:336px;letter-spacing:-0.42px;">+1,50</div>
<div class="t " style="left:346.8px;top:357px;">Do.</div>
<div class="t " style="left:372.8px;top:358px;font-size:9.5px;line-height:12px;height:12px;color:#9898a4;letter-spacing:0.1px;">(N)</div>
<div class="t " style="left:402.7px;top:357px;letter-spacing:-0.56px;">06.11.2025</div>
<div class="t " style="left:482.7px;top:357px;letter-spacing:-0.56px;">08:00</div>
<div class="t " style="left:542.7px;top:357px;letter-spacing:-0.56px;">18:00</div>
<div class="t " style="left:602.7px;top:357px;letter-spacing:-0.56px;">0,75</div>
<div class="t " style="left:667.7px;top:357px;letter-spacing:-0.56px;">9,25</div>
<div class="t " style="left:732.7px;top:357px;letter-spacing:-0.56px;">6,00</div>
<div class="t grn" style="left:797.7px;top:357px;letter-spacing:-0.42px;">+2,25</div>
<div class="t " style="left:346.8px;top:378px;letter-spacing:-0.1px;">Fr.</div>
<div class="t " style="left:366.8px;top:379px;font-size:9.5px;line-height:12px;height:12px;color:#9898a4;letter-spacing:0.1px;">(N)</div>
<div class="t " style="left:402.7px;top:378px;letter-spacing:-0.56px;">07.11.2025</div>
<div class="t " style="left:482.7px;top:378px;letter-spacing:-0.56px;">08:00</div>
<div class="t " style="left:542.7px;top:378px;letter-spacing:-0.56px;">18:00</div>
<div class="t " style="left:602.7px;top:378px;letter-spacing:-0.56px;">0,75</div>
<div class="t " style="left:667.7px;top:378px;letter-spacing:-0.56px;">9,25</div>
<div class="t " style="left:732.7px;top:378px;letter-spacing:-0.56px;">6,00</div>
<div class="t grn" style="left:797.7px;top:378px;letter-spacing:-0.42px;">+2,25</div>
<div class="t b navy" style="left:310.6px;top:399px;letter-spacing:0.28px;">CW 46/2025</div>
<div class="t " style="left:388.2px;top:400.5px;font-size:10px;line-height:11px;height:11px;font-style:italic;color:#8a8a8a;letter-spacing:0px;">/</div>
<div class="t " style="left:394.7px;top:400.5px;font-size:10px;line-height:11px;height:11px;color:#808080;letter-spacing:0px;">4</div>
<div class="t b g" style="left:603.0px;top:399px;letter-spacing:0.3px;">2,00</div>
<div class="t b g" style="left:668.2px;top:399px;letter-spacing:0.3px;">40,00</div>
<div class="t b g" style="left:733.4px;top:399px;letter-spacing:0.3px;">30,00</div>
<div class="t b g" style="left:798.9px;top:399px;letter-spacing:0.3px;">+7,50</div>
<div class="t b g" style="left:863.9px;top:399px;letter-spacing:0.3px;">4,00</div>
<div class="t " style="left:346.8px;top:420px;letter-spacing:0.39px;">Mo.</div>
<div class="t " style="left:375.4px;top:421px;font-size:9.5px;line-height:12px;height:12px;color:#9898a4;letter-spacing:0.1px;">(N)</div>
<div class="t " style="left:402.7px;top:420px;letter-spacing:-0.56px;">10.11.2025</div>
<div class="t " style="left:482.7px;top:420px;letter-spacing:-0.56px;">08:00</div>
<div class="t " style="left:542.7px;top:420px;letter-spacing:-0.56px;">18:00</div>
<div class="t " style="left:602.7px;top:420px;letter-spacing:-0.56px;">0,50</div>
<div class="t " style="left:667.7px;top:420px;letter-spacing:-0.56px;">13,50</div>
<div class="t " style="left:732.7px;top:420px;letter-spacing:-0.56px;">8,00</div>
<div class="t grn" style="left:797.7px;top:420px;letter-spacing:-0.42px;">+4,50</div>
<div class="t " style="left:346.8px;top:441px;letter-spacing:0.33px;">Mi.</div>
<div class="t " style="left:371.8px;top:442px;font-size:9.5px;line-height:12px;height:12px;color:#9898a4;letter-spacing:0.1px;">(N)</div>
<svg style="left:326px;top:441px" width="16" height="16" viewBox="0 0 16 16"><path d="M1.4 15.8C3 14.2 13 14.2 14.6 15.8Z" fill="#f0b42a"/><path d="M9.2 4.6C9.6 8 8.6 11.6 6.2 14.8H9.6C11 11.6 11.4 8 10.8 4.6Z" fill="#e06418"/><path d="M9.6 4.6C7.4 1.4 3 1.2 .8 4.6C.6 6.2 1.2 7.6 2 8C2.4 5.8 5 4 9.6 4.6Z" fill="#4a9a2a"/><path d="M9.6 4.6C10.4 1.6 13.6 .8 15.4 3.6C16 5.4 15.4 7.2 14.6 7.8C14.4 5.8 12.6 4.4 9.6 4.6Z" fill="#5ab432"/><path d="M5 2.2C7.2 .2 10.8 .4 12.4 2.2C11 2.6 10 3.4 9.6 4.6C8.8 3.2 7 2.2 5 2.2Z" fill="#3f8a24"/></svg>
<div class="t " style="left:402.7px;top:441px;letter-spacing:-0.56px;">12.11.2025</div>
<div class="t " style="left:482.7px;top:441px;letter-spacing:-0.56px;">08:00</div>
<div class="t " style="left:542.7px;top:441px;letter-spacing:-0.56px;">18:00</div>
<div class="t " style="left:602.7px;top:441px;letter-spacing:-0.56px;">0,50</div>
<div class="t " style="left:667.7px;top:441px;letter-spacing:-0.56px;">13,50</div>
<div class="t " style="left:732.7px;top:441px;letter-spacing:-0.56px;">8,00</div>
<div class="t grn" style="left:797.7px;top:441px;letter-spacing:-0.42px;">+4,50</div>
<div class="t " style="left:862.7px;top:441px;letter-spacing:-0.56px;">4,00</div>
<div class="t " style="left:346.8px;top:462px;">Do.</div>
<div class="t " style="left:372.8px;top:463px;font-size:9.5px;line-height:12px;height:12px;color:#9898a4;letter-spacing:0.1px;">(N)</div>
<div class="t " style="left:402.7px;top:462px;letter-spacing:-0.56px;">13.11.2025</div>
<div class="t " style="left:482.7px;top:462px;letter-spacing:-0.56px;">08:00</div>
<div class="t " style="left:542.7px;top:462px;letter-spacing:-0.56px;">15:00</div>
<div class="t " style="left:602.7px;top:462px;letter-spacing:-0.56px;">0,50</div>
<div class="t red" style="left:667.7px;top:462px;letter-spacing:-0.56px;">6,50</div>
<div class="t red" style="left:732.7px;top:462px;letter-spacing:-0.56px;">8,00</div>
<div class="t red" style="left:797.7px;top:462px;letter-spacing:-0.42px;">-1,50</div>
<div class="t " style="left:346.8px;top:483px;letter-spacing:-0.1px;">Fr.</div>
<div class="t " style="left:366.8px;top:484px;font-size:9.5px;line-height:12px;height:12px;color:#9898a4;letter-spacing:0.1px;">(N)</div>
<div class="t " style="left:402.7px;top:483px;letter-spacing:-0.56px;">14.11.2025</div>
<div class="t " style="left:482.7px;top:483px;letter-spacing:-0.56px;">08:00</div>
<div class="t " style="left:542.7px;top:483px;letter-spacing:-0.56px;">15:00</div>
<div class="t " style="left:602.7px;top:483px;letter-spacing:-0.56px;">0,50</div>
<div class="t " style="left:667.7px;top:483px;letter-spacing:-0.56px;">6,50</div>
<div class="t " style="left:732.7px;top:483px;letter-spacing:-0.56px;">6,00</div>
<div class="t b navy" style="left:310.6px;top:504px;letter-spacing:0.28px;">CW 47/2025</div>
<div class="t " style="left:388.2px;top:505.5px;font-size:10px;line-height:11px;height:11px;font-style:italic;color:#8a8a8a;letter-spacing:0px;">/</div>
<div class="t " style="left:394.7px;top:505.5px;font-size:10px;line-height:11px;height:11px;color:#808080;letter-spacing:0px;">4</div>
<div class="t b g" style="left:603.0px;top:504px;letter-spacing:0.3px;">1,50</div>
<div class="t b g" style="left:668.2px;top:504px;letter-spacing:0.3px;">22,50</div>
<div class="t b g" style="left:733.4px;top:504px;letter-spacing:0.3px;">18,00</div>
<div class="t b g" style="left:798.9px;top:504px;letter-spacing:0.3px;">+2,50</div>
<div class="t " style="left:346.8px;top:525px;letter-spacing:0.39px;">Mo.</div>
<div class="t " style="left:375.4px;top:526px;font-size:9.5px;line-height:12px;height:12px;color:#9898a4;letter-spacing:0.1px;">(N)</div>
<div class="t " style="left:402.7px;top:525px;letter-spacing:-0.56px;">17.11.2025</div>
<div class="t " style="left:482.7px;top:525px;letter-spacing:-0.56px;">08:00</div>
<div class="t " style="left:542.7px;top:525px;letter-spacing:-0.56px;">15:00</div>
<div class="t " style="left:602.7px;top:525px;letter-spacing:-0.56px;">0,50</div>
<div class="t " style="left:667.7px;top:525px;letter-spacing:-0.56px;">9,50</div>
<div class="t " style="left:732.7px;top:525px;letter-spacing:-0.56px;">6,00</div>
<div class="t grn" style="left:797.7px;top:525px;letter-spacing:-0.42px;">+2,50</div>
<div class="t " style="left:346.8px;top:546px;letter-spacing:0.33px;">Mi.</div>
<svg style="left:325px;top:546px" width="16" height="16" viewBox="0 0 16 16"><polygon points="8.00,1.10 10.12,5.49 14.94,6.14 11.42,9.51 12.29,14.31 8.00,12.00 3.71,14.31 4.58,9.51 1.06,6.14 5.88,5.49" fill="#8cc04a" stroke="#8cc04a" stroke-width=".7" stroke-linejoin="round"/></svg>
<div class="t " style="left:402.7px;top:546px;letter-spacing:-0.56px;">19.11.2025</div>
<div class="t " style="left:1020.7px;top:546px;font-size:11.5px;letter-spacing:0.35px;">Holiday</div>
<div class="t " style="left:346.8px;top:567px;">Do.</div>
<div class="t " style="left:372.8px;top:568px;font-size:9.5px;line-height:12px;height:12px;color:#9898a4;letter-spacing:0.1px;">(N)</div>
<div class="t " style="left:402.7px;top:567px;letter-spacing:-0.56px;">20.11.2025</div>
<div class="t " style="left:482.7px;top:567px;letter-spacing:-0.56px;">08:00</div>
<div class="t " style="left:542.7px;top:567px;letter-spacing:-0.56px;">15:00</div>
<div class="t " style="left:602.7px;top:567px;letter-spacing:-0.56px;">0,50</div>
<div class="t " style="left:667.7px;top:567px;letter-spacing:-0.56px;">6,50</div>
<div class="t " style="left:732.7px;top:567px;letter-spacing:-0.56px;">6,00</div>
<div class="t " style="left:346.8px;top:588px;letter-spacing:-0.1px;">Fr.</div>
<div class="t " style="left:366.8px;top:589px;font-size:9.5px;line-height:12px;height:12px;color:#9898a4;letter-spacing:0.1px;">(N)</div>
<div class="t " style="left:402.7px;top:588px;letter-spacing:-0.56px;">21.11.2025</div>
<div class="t " style="left:482.7px;top:588px;letter-spacing:-0.56px;">08:00</div>
<div class="t " style="left:542.7px;top:588px;letter-spacing:-0.56px;">15:00</div>
<div class="t " style="left:602.7px;top:588px;letter-spacing:-0.56px;">0,50</div>
<div class="t " style="left:667.7px;top:588px;letter-spacing:-0.56px;">6,50</div>
<div class="t " style="left:732.7px;top:588px;letter-spacing:-0.56px;">6,00</div>
<div class="t b navy" style="left:310.6px;top:609px;letter-spacing:0.28px;">CW 48/2025</div>
<div class="t " style="left:388.2px;top:610.5px;font-size:10px;line-height:11px;height:11px;font-style:italic;color:#8a8a8a;letter-spacing:0px;">/</div>
<div class="t " style="left:394.7px;top:610.5px;font-size:10px;line-height:11px;height:11px;color:#808080;letter-spacing:0px;">4</div>
<div class="t b g" style="left:603.0px;top:609px;letter-spacing:0.3px;">2,00</div>
<div class="t b g" style="left:668.2px;top:609px;letter-spacing:0.3px;">34,00</div>
<div class="t b g" style="left:733.4px;top:609px;letter-spacing:0.3px;">30,00</div>
<div class="t b g" style="left:798.9px;top:609px;letter-spacing:0.3px;">+1,50</div>
<div class="t b w" style="left:310.6px;top:630px;letter-spacing:-0.1px;">Total:</div>
<div class="t b w" style="left:603.4px;top:630px;letter-spacing:0.3px;"><u>7,50</u></div>
<div class="t b w" style="left:668.4px;top:630px;letter-spacing:0.3px;"><u>129,50</u></div>
<div class="t b w" style="left:733.4px;top:630px;letter-spacing:0.3px;"><u>102,00</u></div>
<div class="t b w" style="left:798.4px;top:630px;letter-spacing:0.3px;"><u>+17,50</u></div>
<div class="t b w" style="left:863.4px;top:630px;letter-spacing:0.3px;"><u>4,00</u></div>
<div class="t b w" style="left:941.4px;top:630px;letter-spacing:0.3px;"><u>6,00</u></div>
<div class="t " style="left:85.4px;top:495px;font-size:20.5px;line-height:26px;height:26px;letter-spacing:0.25px;">Absence type</div>
<div class="t " style="left:1163.2px;top:350px;font-size:20.5px;line-height:26px;height:26px;letter-spacing:0.15px;">Hints to the timestamp</div>
<div class="t " style="left:1043.9px;top:588px;font-size:20.5px;line-height:26px;height:26px;letter-spacing:0.22px;">Tuesdays -&gt; No working day</div>
<svg style="left:0;top:0" width="1472" height="791" viewBox="0 0 1472 791">
<g stroke="#e8101a" stroke-linecap="round" stroke-linejoin="round" fill="none">
<g stroke-width="4.6"><path d="M205.5 482.5L317.5 453"/><path d="M1173 391L1079 539.5"/><path d="M988 594.8L380 540.6"/></g>
<g stroke-width="4"><path d="M303 449.6L318.6 452.6L306.6 463"/><path d="M1079.6 526.4L1078.2 540.6L1090.8 533.8"/><path d="M393.4 534.4L378.2 540.4L392.4 548.6"/></g>
</g></svg>
<svg style="left:1076px;top:692px" width="13" height="20" viewBox="0 0 13 20"><path d="M1 1V15.5L4.4 12.4L7 18.6L9.4 17.6L6.8 11.6H11.4Z" fill="#fff" stroke="#000" stroke-width="1" stroke-linejoin="miter"/></svg>
</body></html>
